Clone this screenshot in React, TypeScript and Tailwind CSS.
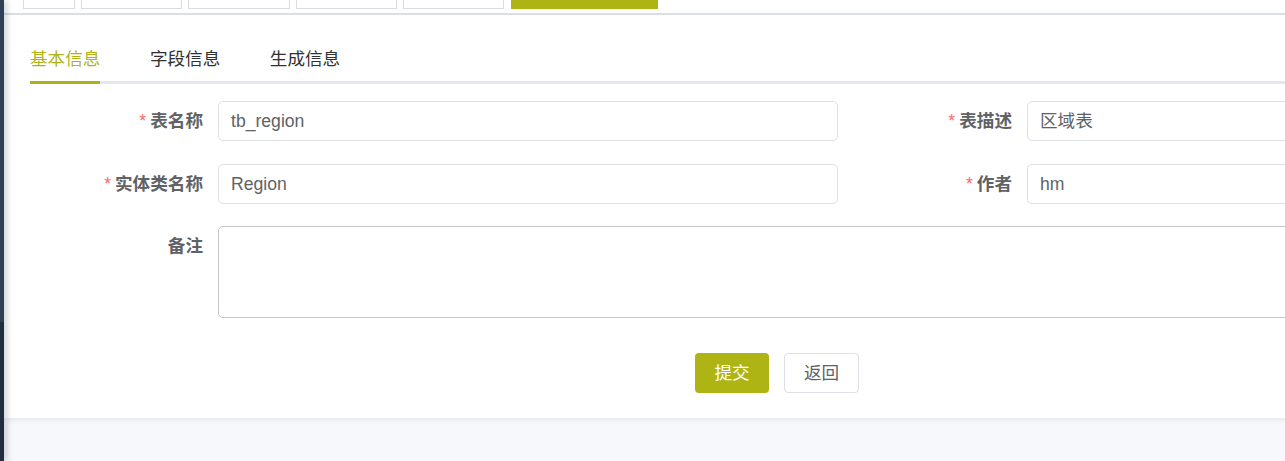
import React from "react";

const font = { fontFamily: '"Liberation Sans", "Noto Sans CJK SC", sans-serif' };

const tags = [
  { w: "w-[52px]", active: false },
  { w: "w-[101px]", active: false },
  { w: "w-[102px]", active: false },
  { w: "w-[101px]", active: false },
  { w: "w-[101px]", active: false },
  { w: "w-[147px]", active: true },
];

function Label({ text, required }: { text: string; required?: boolean }) {
  return (
    <div className="w-[188px] shrink-0 pr-[15px] text-right h-[40px] leading-[40px] text-[17.6px] font-bold text-[#606266]">
      {required && <span className="text-[#f56c6c] font-normal mr-[4px]">*</span>}
      {text}
    </div>
  );
}

function Field({ label, value, required }: { label: string; value: string; required?: boolean }) {
  return (
    <div className="flex">
      <Label text={label} required={required} />
      <div className="w-[620px] h-[40px] border border-[#dcdfe6] rounded-[5px] bg-white pl-[12px] leading-[38px] text-[17.6px] text-[#606266] whitespace-nowrap">
        {value}
      </div>
    </div>
  );
}

export default function App() {
  return (
    <div className="w-full h-[461px] flex bg-[#f7f8fb] overflow-hidden" style={font}>
      {/* sidebar edge */}
      <div className="w-[4px] shrink-0 flex flex-col relative z-10 shadow-[2px_0_6px_rgba(0,21,41,0.3)]">
        <div className="h-[322px] bg-[#2f3f55]" />
        <div className="flex-1 bg-[#1f2d3d]" />
      </div>

      <div className="flex-1 flex flex-col min-w-0">
        {/* tags view */}
        <div className="h-[15px] bg-white border-b-2 border-[#dde1e8] flex gap-[6px] pl-[19px]">
          {tags.map((t, i) => (
            <div
              key={i}
              className={
                t.active
                  ? `${t.w} h-[9px] bg-[#aeb414] ml-[1px]`
                  : `${t.w} h-[9px] border border-t-0 border-[#d8dce5] bg-white`
              }
            />
          ))}
        </div>

        {/* card */}
        <div className="bg-white pl-[26px] pt-[22px] pb-[25px] shadow-[0_2px_6px_rgba(0,0,0,0.07)] w-[1700px]">
          {/* tabs */}
          <div className="flex border-b-[3px] border-[#e4e7ed] text-[17.6px]">
            <div className="h-[44px] leading-[44px] text-[#aeb414] relative mr-[49.5px]">
              基本信息
              <div className="absolute left-0 right-0 -bottom-[3px] h-[3px] bg-[#aeb414]" />
            </div>
            <div className="h-[44px] leading-[44px] text-[#303133] mr-[49.5px]">字段信息</div>
            <div className="h-[44px] leading-[44px] text-[#303133]">生成信息</div>
          </div>

          {/* form */}
          <div className="pt-[17px]">
            <div className="grid grid-cols-[809px_809px] mb-[23px]">
              <Field label="表名称" value="tb_region" required />
              <Field label="表描述" value="区域表" required />
            </div>
            <div className="grid grid-cols-[809px_809px] mb-[22px]">
              <Field label="实体类名称" value="Region" required />
              <Field label="作者" value="hm" required />
            </div>
            <div className="flex">
              <Label text="备注" />
              <div className="w-[1430px] h-[92px] border border-[#c4c7ce] rounded-[5px] bg-white" />
            </div>

            <div className="flex gap-[15px] ml-[665px] mt-[35px]">
              <button className="w-[74px] h-[40px] rounded-[4px] bg-[#aeb414] text-white text-[17.6px]">
                提交
              </button>
              <button className="w-[75px] h-[40px] rounded-[4px] border border-[#dcdfe6] bg-white text-[#606266] text-[17.6px]">
                返回
              </button>
            </div>
          </div>
        </div>
      </div>
    </div>
  );
}
